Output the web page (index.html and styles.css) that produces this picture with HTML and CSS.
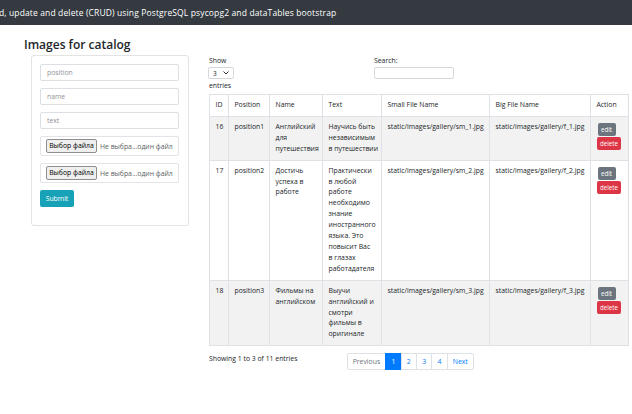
FILE: index.html
```html
<!DOCTYPE html>
<html lang="ru">
<head>
<meta charset="utf-8">
<title>Images for catalog</title>
<link rel="stylesheet" href="styles.css">
</head>
<body>
<header class="navbar"><span class="brand">d, update and delete (CRUD) using PostgreSQL psycopg2 and dataTables bootstrap</span></header>
<main class="page">
  <h3 class="title">Images for catalog</h3>
  <div class="content">
    <form class="card">
      <input class="input" type="text" placeholder="position">
      <input class="input" type="text" placeholder="name">
      <input class="input" type="text" placeholder="text">
      <div class="file"><span class="file-btn">Выбор файла</span><span class="file-name">Не выбра...один файл</span></div>
      <div class="file"><span class="file-btn">Выбор файла</span><span class="file-name">Не выбра...один файл</span></div>
      <button class="submit" type="button">Submit</button>
    </form>
    <section class="dt">
      <div class="dt-top">
        <div class="dt-length">
          <div class="lbl">Show</div>
          <div class="select"><span>3</span><svg class="chev" width="6" height="4" viewBox="0 0 6 4"><polyline points="0.5,0.5 3,3 5.5,0.5" fill="none" stroke="#333" stroke-width="1"/></svg></div>
          <div class="lbl">entries</div>
        </div>
        <div class="dt-search">
          <div class="lbl">Search:</div>
          <div class="search-box"></div>
        </div>
      </div>
      <table class="grid">
        <colgroup>
          <col class="c-id"><col class="c-pos"><col class="c-name"><col class="c-text"><col class="c-sm"><col class="c-big"><col class="c-act">
        </colgroup>
        <thead>
          <tr><th>ID</th><th>Position</th><th>Name</th><th>Text</th><th>Small File Name</th><th>Big File Name</th><th>Action</th></tr>
        </thead>
        <tbody>
          <tr class="odd">
            <td>16</td><td>position1</td><td class="nw">Английский<br>для<br>путешествия</td><td class="nw">Научись быть<br>независимым<br>в путешествии</td><td>static/images/gallery/sm_1.jpg</td><td>static/images/gallery/f_1.jpg</td>
            <td><span class="btn edit">edit</span><span class="btn del">delete</span></td>
          </tr>
          <tr>
            <td>17</td><td>position2</td><td class="nw">Достичь<br>успеха в<br>работе</td><td class="nw">Практически<br>в любой<br>работе<br>необходимо<br>знание<br>иностранного<br>языка. Это<br>повысит Вас<br>в глазах<br>работадателя</td><td>static/images/gallery/sm_2.jpg</td><td>static/images/gallery/f_2.jpg</td>
            <td><span class="btn edit">edit</span><span class="btn del">delete</span></td>
          </tr>
          <tr class="odd">
            <td>18</td><td>position3</td><td class="nw">Фильмы на<br>английском</td><td class="nw">Выучи<br>английский и<br>смотри<br>фильмы в<br>оригинале</td><td>static/images/gallery/sm_3.jpg</td><td>static/images/gallery/f_3.jpg</td>
            <td><span class="btn edit">edit</span><span class="btn del">delete</span></td>
          </tr>
        </tbody>
      </table>
      <div class="dt-bottom">
        <div class="info">Showing 1 to 3 of 11 entries</div>
        <ul class="pagination">
          <li class="pg first">Previous</li>
          <li class="pg active">1</li>
          <li class="pg">2</li>
          <li class="pg">3</li>
          <li class="pg">4</li>
          <li class="pg last">Next</li>
        </ul>
      </div>
    </section>
  </div>
</main>
</body>
</html>
```
FILE: styles.css
```css
* { box-sizing: border-box; }
html, body { margin: 0; padding: 0; background: #fff; }
body {
  font-family: "Open Sans", "Noto Sans", sans-serif;
  color: #212529;
  font-size: 6.85px;
  line-height: 11px;
  overflow: hidden;
  width: 632px;
  height: 414px;
}
.navbar {
  height: 25px;
  background: #343a40;
  display: flex;
  align-items: center;
  white-space: nowrap;
  overflow: hidden;
}
.brand {
  color: #fff;
  font-size: 8.5px;
  letter-spacing: 0.13px;
  line-height: 12px;
  margin-left: -1px;
}
.page { padding: 12px 0 0 24px; }
.title {
  margin: 0;
  font-size: 12px;
  line-height: 15px;
  font-weight: 600;
  color: #212529;
}
.content {
  display: flex;
  align-items: flex-start;
  margin-top: 3px;
}
.card {
  margin: 0 0 0 7px;
  width: 158px;
  height: 171px;
  flex: none;
  border: 1px solid #e3e3e3;
  border-radius: 3px;
  padding: 8px 9px 0 8px;
  display: flex;
  flex-direction: column;
  align-items: flex-start;
}
.input {
  display: block;
  width: 139px;
  height: 17px;
  margin: 0 0 7px 0;
  padding: 0 6px;
  border: 1px solid #dcdfe3;
  border-radius: 2px;
  font-family: inherit;
  font-size: 6.85px;
  color: #495057;
  background: #fff;
  outline: none;
}
.input::placeholder { color: #909396; }
.file {
  width: 139px;
  height: 20px;
  margin: 0 0 7px 0;
  border: 1px solid #e1e4e8;
  border-radius: 2px;
  display: flex;
  align-items: center;
  padding-left: 5px;
  white-space: nowrap;
  overflow: hidden;
}
.file-btn {
  height: 14px;
  width: 51px;
  text-align: center;
  line-height: 12px;
  padding: 0;
  background: #efefef;
  border: 1px solid #8f8f8f;
  border-radius: 2px;
  color: #000;
  font-size: 6.85px;
  flex: none;
}
.file-name {
  margin-left: 3px;
  color: #5c5f62;
  font-size: 6.85px;
}
.submit {
  width: 34px;
  height: 17px;
  padding: 0;
  border: none;
  border-radius: 2px;
  background: #17a2b8;
  color: #fff;
  font-family: inherit;
  font-size: 6.85px;
}
.dt {
  width: 330px;
  flex: none;
  margin-left: 20px;
}
.dt-top { display: flex; }
.dt-length, .dt-search { width: 165px; }
.lbl { height: 11px; }
.select {
  width: 26px;
  height: 12px;
  margin: 1px 0 1px -1px;
  border: 1px solid #d4d8dc;
  border-radius: 2px;
  display: flex;
  align-items: center;
  justify-content: space-between;
  padding: 0 4px 0 4px;
  font-size: 6.5px;
}
.chev { display: block; }
.search-box {
  width: 80px;
  height: 12px;
  margin-top: 1px;
  border: 1px solid #d4d8dc;
  border-radius: 2px;
}
.grid {
  margin-top: 3px;
  width: 419px;
  table-layout: fixed;
  border-collapse: collapse;
}
.c-id { width: 19px; }
.c-pos { width: 41px; }
.c-name { width: 53px; }
.c-text { width: 59px; }
.c-sm { width: 108px; }
.c-big { width: 101px; }
.c-act { width: 38px; }
.grid th, .grid td {
  border: 1px solid #dee2e6;
  padding: 5px 5px 5px 5.5px;
  text-align: left;
  vertical-align: top;
  font-weight: 400;
  line-height: 10.9px;
}
.grid td.nw { white-space: nowrap; }
.grid tr.odd td { background: #f2f2f2; }
.btn {
  display: block;
  width: fit-content;
  height: 13.5px;
  line-height: 13.5px;
  padding: 0 3.5px;
  border-radius: 2px;
  color: #fff;
  font-size: 6.2px;
}
.edit { background: #6c757d; margin: 1px 0 0 1px; }
.del { background: #dc3545; margin-top: 0.5px; }
.dt-bottom { display: flex; margin-top: 7px; }
.info { width: 137.5px; flex: none; }
.pagination {
  display: flex;
  list-style: none;
  margin: 0;
  padding: 0;
}
.pg {
  height: 17px;
  line-height: 15px;
  padding: 0 5.2px;
  border: 1px solid #dee2e6;
  margin-left: -1px;
  color: #007bff;
}
.pg.first { margin-left: 0; color: #6c757d; border-radius: 2px 0 0 2px; }
.pg.last { border-radius: 0 2px 2px 0; }
.pg.active { background: #007bff; border-color: #007bff; color: #fff; }
```
